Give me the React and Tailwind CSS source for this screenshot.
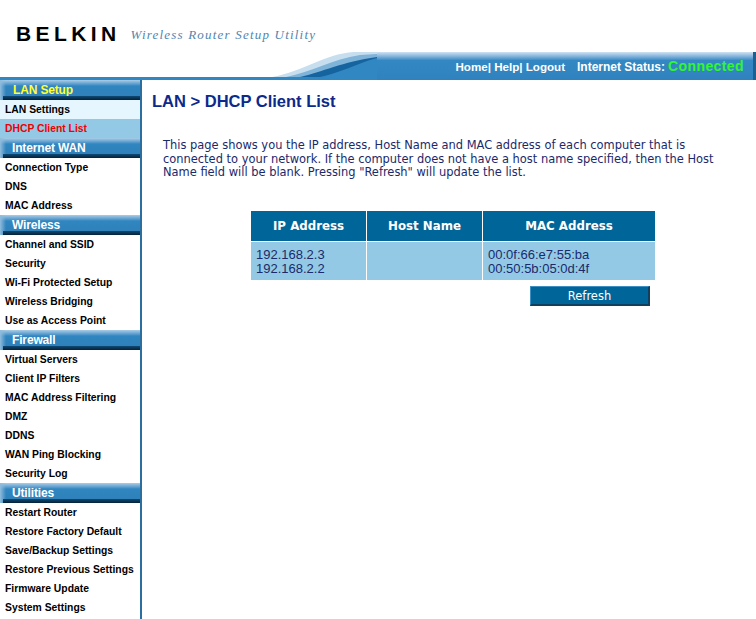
const menu = [
  { title: 'LAN Setup', active: true, items: ['LAN Settings', 'DHCP Client List'] },
  { title: 'Internet WAN', items: ['Connection Type', 'DNS', 'MAC Address'] },
  { title: 'Wireless', items: ['Channel and SSID', 'Security', 'Wi-Fi Protected Setup', 'Wireless Bridging', 'Use as Access Point'] },
  { title: 'Firewall', items: ['Virtual Servers', 'Client IP Filters', 'MAC Address Filtering', 'DMZ', 'DDNS', 'WAN Ping Blocking', 'Security Log'] },
  { title: 'Utilities', items: ['Restart Router', 'Restore Factory Default', 'Save/Backup Settings', 'Restore Previous Settings', 'Firmware Update', 'System Settings'] },
];

function MenuItem({ label }) {
  let color = 'bg-white text-black';
  if (label === 'LAN Settings') color = 'bg-[#e5f6ff] text-black';
  if (label === 'DHCP Client List') color = 'bg-[#93c9e4] text-[#f00000]';
  return (
    <a className={`flex h-[19px] items-center whitespace-nowrap pl-[5px] text-[10.35px] font-bold ${color}`}>
      {label}
    </a>
  );
}

function MenuGroup({ title, active, items }) {
  return (
    <div>
      <div className="relative h-[20px] bg-gradient-to-b from-[#a9cde6] via-[#2f86c0] via-30% to-[#2f7fb8]">
        <div className="absolute inset-y-0 left-0 w-[6px] bg-gradient-to-r from-[#8fbcdc] to-transparent" />
        <div className={`absolute top-[2px] text-[12px] font-bold leading-[17px] tracking-[-0.15px] ${active ? 'left-[13px] text-[#ffff33]' : 'left-[12px] text-white'}`}>
          {title}
        </div>
        <div className="absolute bottom-0 left-[3px] right-0 h-[4px] bg-gradient-to-b from-[#0f4a75] to-[#062238]" />
      </div>
      {items.map((item) => (
        <MenuItem key={item} label={item} />
      ))}
    </div>
  );
}

export default function App() {
  return (
    <div className="flex h-screen flex-col overflow-hidden bg-white font-['Liberation_Sans',Arial,sans-serif]">
      {/* Header */}
      <header className="flex h-[80px] flex-col">
        <div className="flex h-[52px] items-end pb-[6px] pl-[16px]">
          <span className="text-[21px] font-bold leading-[24px] tracking-[4.4px] text-black">BELKIN</span>
          <span className="ml-[10px] pb-[4px] font-['Liberation_Serif',serif] text-[13px] italic leading-[14px] tracking-[1.2px] text-[#4f86b0]">
            Wireless Router Setup Utility
          </span>
        </div>
        <div className="flex flex-1">
          <div className="w-[272px] self-end border-b-[3px] border-[#3187c2]" />
          <svg width="105" height="28" viewBox="0 0 105 28" className="shrink-0">
            <path d="M0 25 C30 20 52 2 82 0 H105 V28 H0 Z" fill="#c7deef" />
            <path d="M14 25 C40 20 60 7 88 3 L105 2 V28 H14 Z" fill="#7fb3d8" />
            <path d="M28 25 C50 20 70 10 105 5 V28 H28 Z" fill="#15639f" />
            <path d="M48 25 C68 21 86 11 105 6 V28 H48 Z" fill="#3187c2" />
            <rect x="0" y="25" width="105" height="3" fill="#3187c2" />
          </svg>
          <div className="flex flex-1 items-center justify-end border-r-[3px] border-[#1d5f8f] bg-gradient-to-b from-[#cfe2f2] via-[#3388c4] via-30% to-[#2f82bd] pr-[9px] pt-[1px] text-[12px] font-bold">
            <span className="text-[11.6px] text-white">Home| Help| Logout</span>
            <span className="ml-[12px] text-white">Internet Status:</span>
            <span className="ml-[3px] text-[14px] tracking-[0.4px] text-[#33f533]">Connected</span>
          </div>
        </div>
      </header>

      <div className="flex min-h-0 flex-1">
        {/* Sidebar */}
        <nav className="w-[142px] shrink-0 border-r-[2px] border-[#2a6f9f]">
          {menu.map((group) => (
            <MenuGroup key={group.title} {...group} />
          ))}
        </nav>

        {/* Main */}
        <main className="flex-1 pl-[10px]">
          <h1 className="mt-[11px] text-[16.5px] font-bold leading-[20px] text-[#0c2a8c]">LAN &gt; DHCP Client List</h1>
          <p className="ml-[11px] mt-[28px] w-[552px] font-['DejaVu_Sans',Verdana,sans-serif] text-[11.45px] leading-[13.5px] text-[#1b2a6b]">
            This page shows you the IP address, Host Name and MAC address of each computer that is connected to your network. If the computer does not have a host name specified, then the Host Name field will be blank. Pressing "Refresh" will update the list.
          </p>
          <div className="ml-[99px] mt-[31px] w-[404px]">
            <div className="grid grid-cols-[115px_115px_172px] gap-[1px]">
              {['IP Address', 'Host Name', 'MAC Address'].map((h) => (
                <div key={h} className="flex h-[30px] items-center justify-center bg-[#006699] pt-[2px] font-['DejaVu_Sans',Verdana,sans-serif] text-[11.8px] font-bold text-white">
                  {h}
                </div>
              ))}
              <div className="h-[38px] bg-[#93c9e4] px-[5px] pt-[6px] text-[13px] leading-[14px] text-[#1b2a6b]">
                192.168.2.3<br />192.168.2.2
              </div>
              <div className="bg-[#93c9e4]" />
              <div className="bg-[#93c9e4] px-[5px] pt-[6px] text-[13px] leading-[14px] text-[#1b2a6b]">
                00:0f:66:e7:55:ba<br />00:50:5b:05:0d:4f
              </div>
            </div>
            <button className="ml-[279px] mt-[6px] block h-[20px] w-[120px] border-b-[2px] border-l border-r-[2px] border-t border-b-[#123f5c] border-l-[#3c8fc0] border-r-[#123f5c] border-t-[#3c8fc0] bg-[#006699] pt-[1px] font-['DejaVu_Sans',Verdana,sans-serif] text-[11.5px] leading-[16px] text-white">
              Refresh
            </button>
          </div>
        </main>
      </div>
    </div>
  );
}
